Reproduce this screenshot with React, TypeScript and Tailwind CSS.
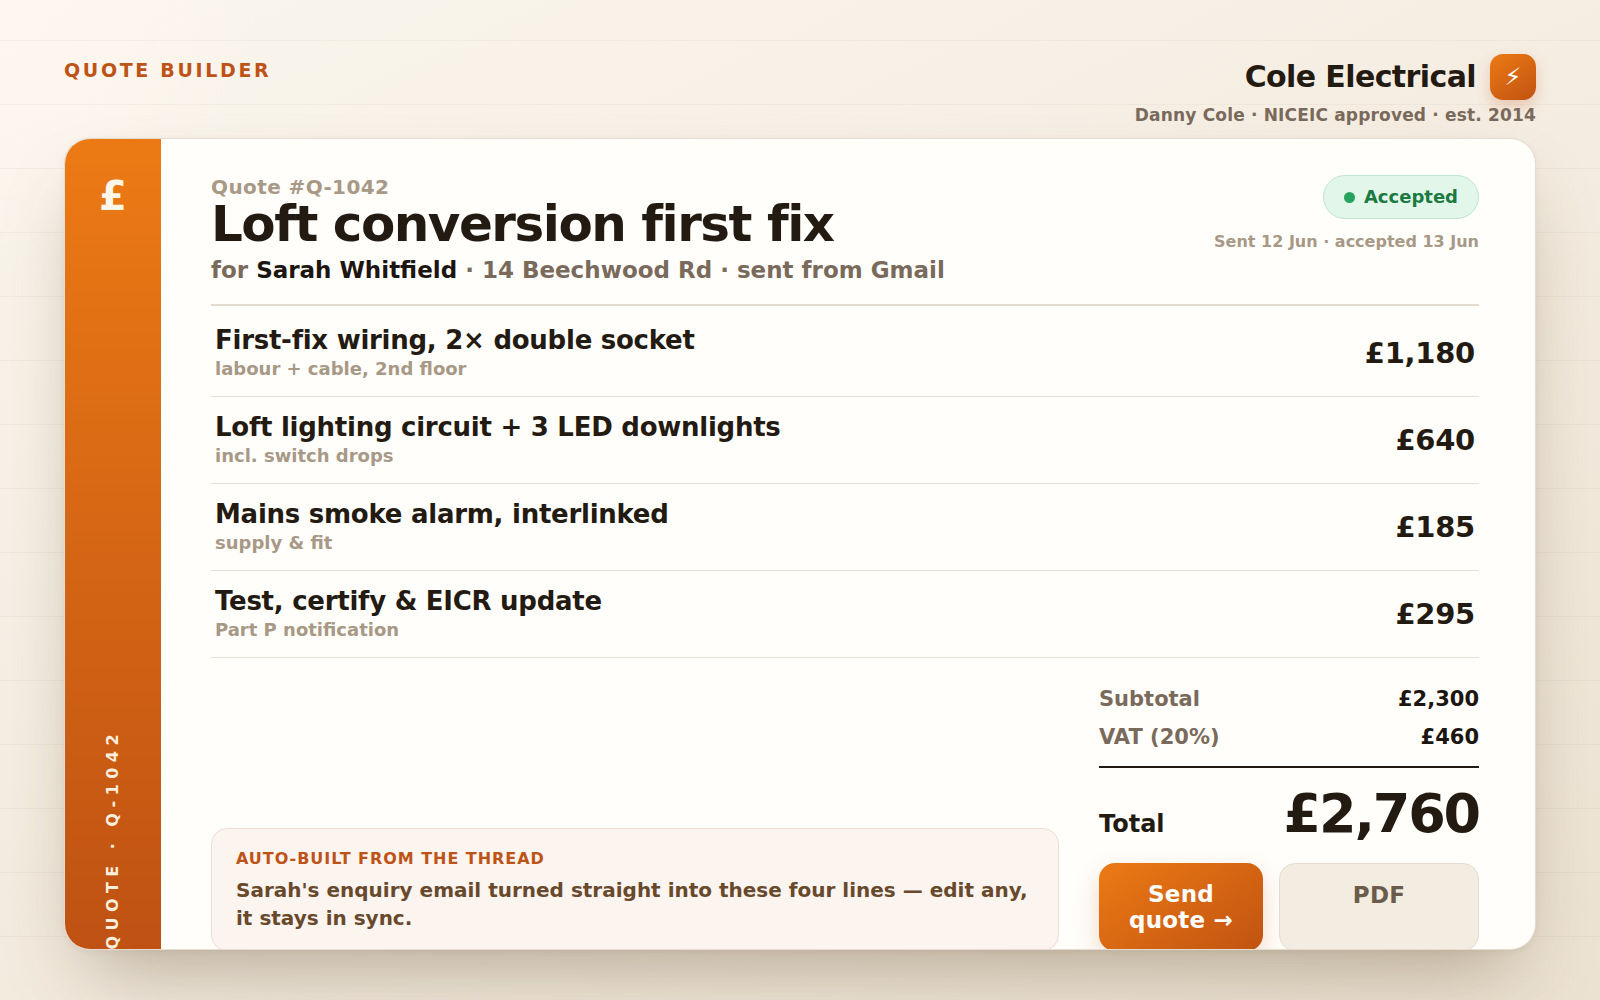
import React from 'react';

const lineItems = [
  { title: 'First-fix wiring, 2× double socket', note: 'labour + cable, 2nd floor', price: '£1,180' },
  { title: 'Loft lighting circuit + 3 LED downlights', note: 'incl. switch drops', price: '£640' },
  { title: 'Mains smoke alarm, interlinked', note: 'supply & fit', price: '£185' },
  { title: 'Test, certify & EICR update', note: 'Part P notification', price: '£295' },
];

const subtotals = [
  { label: 'Subtotal', value: '£2,300' },
  { label: 'VAT (20%)', value: '£460' },
];

function PageHeader() {
  return (
    <header className="flex items-start justify-between">
      <p className="mt-1 text-[19px] leading-6 tracking-[0.14em] text-[#bd5317]">QUOTE BUILDER</p>
      <div className="flex flex-col items-end">
        <div className="flex items-center gap-3.5">
          <span className="text-[30px] leading-9 tracking-[-0.02em] text-[#231a12]">Cole Electrical</span>
          <span className="flex size-[46px] items-center justify-center rounded-[13px] bg-linear-145 from-[#ec7a14] to-[#c15311] text-2xl text-white shadow-[0_6px_14px_rgba(193,83,17,0.25)]">
            ⚡
          </span>
        </div>
        <p className="mt-1 text-[17px] leading-[22px] tracking-[0.01em] text-[#7a6a5c]">
          Danny Cole · NICEIC approved · est. 2014
        </p>
      </div>
    </header>
  );
}

function Rail() {
  return (
    <aside className="flex w-24 shrink-0 flex-col items-center justify-between bg-linear-to-b from-[#ec7a14] to-[#bf5213] pt-[34px]">
      <span className="text-[40px] leading-[47px] text-[#fff6ea]">£</span>
      <span className="rotate-180 text-[16px] leading-5 tracking-[0.34em] whitespace-nowrap text-[#fdeedd] [writing-mode:vertical-rl]">
        QUOTE · Q-1042
      </span>
    </aside>
  );
}

function QuoteHead() {
  return (
    <div className="flex items-start justify-between border-b-2 border-[#e5dace] pb-5">
      <div>
        <p className="text-[20px] leading-6 tracking-[0.02em] text-[#a89886]">Quote #Q-1042</p>
        <h1 className="text-[50px] leading-[50px] tracking-[-0.03em] text-[#231a12]">Loft conversion first fix</h1>
        <p className="mt-[7px] text-[23px] leading-7 text-[#7a6a5c]">
          for <b className="text-[#1c1510]">Sarah Whitfield</b> · 14 Beechwood Rd · sent from Gmail
        </p>
      </div>
      <div className="flex flex-col items-end gap-3">
        <span className="flex items-center gap-[9px] rounded-full border border-[#bfe6d2] bg-[#e2f6ea] px-5 py-2.5 text-[18px] leading-[22px] text-[#1b7a41]">
          <span className="size-[11px] rounded-full bg-[#27a35f]" />
          Accepted
        </span>
        <p className="text-[16px] leading-[22px] text-[#a89886]">Sent 12 Jun · accepted 13 Jun</p>
      </div>
    </div>
  );
}

function LineItems() {
  return (
    <table className="mt-1 w-full border-collapse">
      <tbody>
        {lineItems.map((item) => (
          <tr key={item.title} className="border-b border-[#e6dfd6]">
            <td className="py-4 pl-1">
              <p className="text-[26px] leading-7 tracking-[-0.01em] text-[#231a12]">{item.title}</p>
              <p className="mt-1 text-[18px] leading-[22px] text-[#a89886]">{item.note}</p>
            </td>
            <td className="py-4 pr-1 text-right text-[29px] leading-8 tracking-[-0.01em] text-[#231a12]">
              {item.price}
            </td>
          </tr>
        ))}
      </tbody>
    </table>
  );
}

function ThreadNote() {
  return (
    <section className="flex-1 rounded-2xl border border-[#f0ddd2] bg-[#fcf4ef] px-6 py-[18px]">
      <h2 className="text-[16px] leading-6 tracking-[0.06em] text-[#bd5317]">AUTO-BUILT FROM THE THREAD</h2>
      <p className="mt-[5px] text-[20px] leading-7 text-[#68492c]">
        Sarah's enquiry email turned straight into these four lines — edit any, it stays in sync.
      </p>
    </section>
  );
}

function Totals() {
  return (
    <div className="w-[380px] shrink-0">
      <dl>
        {subtotals.map((row) => (
          <div key={row.label} className="flex justify-between py-1.5 text-[21px] leading-[26px]">
            <dt className="text-[#7a6a5c]">{row.label}</dt>
            <dd className="text-[#1c1510]">{row.value}</dd>
          </div>
        ))}
        <div className="mt-2.5 flex items-baseline justify-between border-t-2 border-[#231a12] pt-3.5 text-[#231a12]">
          <dt className="text-[24px]">Total</dt>
          <dd className="text-[54px] leading-[63px] tracking-[-0.04em]">£2,760</dd>
        </div>
      </dl>
      <div className="mt-[18px] flex gap-4">
        <button
          type="button"
          className="w-[164px] rounded-2xl bg-linear-145 from-[#ec7a14] to-[#c15311] px-6 py-[18px] text-[23px] leading-[26px] font-bold tracking-[0.01em] text-white shadow-[0_10px_24px_rgba(193,83,17,0.22)]"
        >
          Send quote →
        </button>
        <button
          type="button"
          className="flex flex-1 items-start justify-center rounded-2xl border border-[#e5dccf] bg-[#f3ece1] px-6 py-[18px] text-[23px] leading-[26px] font-bold tracking-[0.01em] text-[#6b5b4b]"
        >
          PDF
        </button>
      </div>
    </div>
  );
}

export default function App() {
  return (
    <div className="flex h-screen flex-col overflow-hidden bg-[repeating-linear-gradient(0deg,transparent_0_63px,rgba(60,40,20,0.035)_63px_64px),radial-gradient(circle_at_0%_0%,#fff6ef_0%,#fff6ef00_14%),linear-gradient(155deg,#faf6ed,#f5ede2_45%,#ece2d1)] px-16 pt-[54px] pb-[50px] font-['DejaVu_Sans',sans-serif] font-bold">
      <PageHeader />
      <main className="mt-3 flex min-h-0 flex-1 overflow-hidden rounded-[26px] border border-[#e6dccf] bg-[#fffefb] shadow-[0_40px_80px_-24px_rgba(80,58,30,0.38),0_2px_6px_rgba(80,58,30,0.06)]">
        <Rail />
        <div className="flex flex-1 flex-col pt-9 pr-14 pl-[50px]">
          <QuoteHead />
          <LineItems />
          <div className="mt-[22px] flex items-end gap-10">
            <ThreadNote />
            <Totals />
          </div>
        </div>
      </main>
    </div>
  );
}
